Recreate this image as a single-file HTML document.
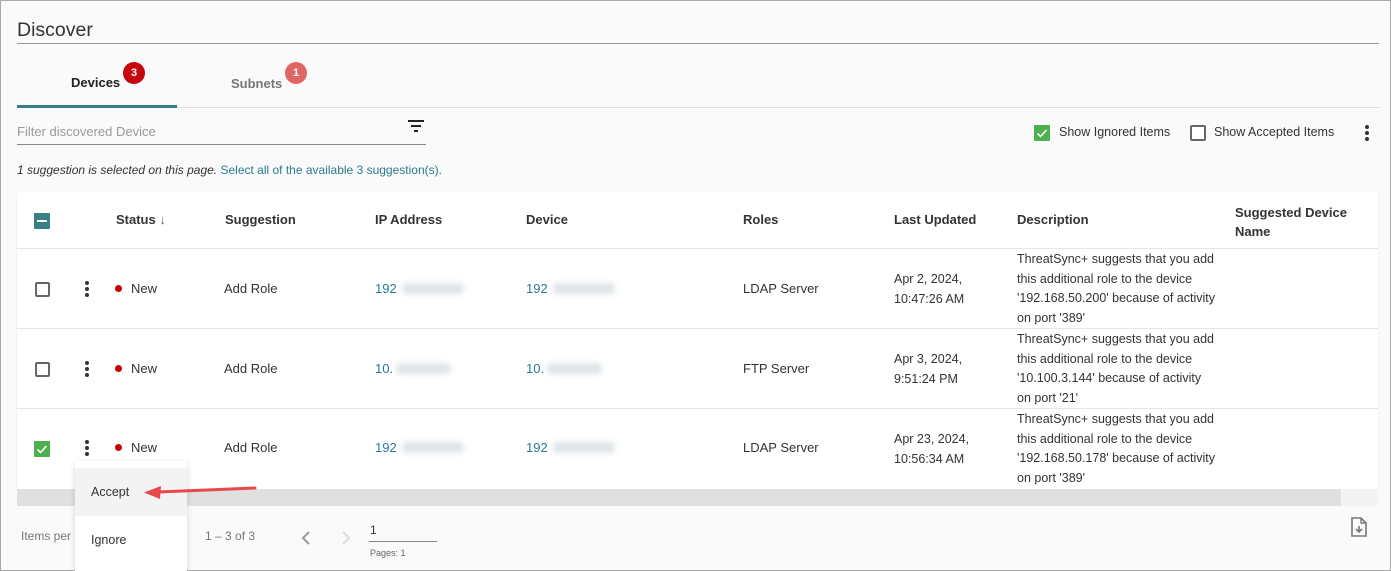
<!DOCTYPE html>
<html><head><style>
*{box-sizing:border-box;margin:0;padding:0}
body{width:1391px;height:571px;overflow:hidden;background:#fafafa;font-family:"Liberation Sans",Arial,sans-serif;color:#333;position:relative}
.frame{position:absolute;left:0;top:0;width:1391px;height:571px;border:1px solid #a8a8a8}
.a{position:absolute;white-space:nowrap}
.th{font-weight:bold;font-size:13px;color:#333}
.td{font-size:13px;color:#333}
.link{color:#2b7a8c}
.blur{position:absolute;height:11px;background:#dde4e7;filter:blur(3px);border-radius:5px}
.cb{position:absolute;width:15px;height:15px;border:2px solid #666;border-radius:2px;background:#fff}
.dots{position:absolute;width:4px}
.dots i{display:block;width:4px;height:4px;border-radius:50%;background:#333;margin-bottom:2px}
.dot{position:absolute;width:7px;height:7px;border-radius:50%;background:#c00}
.hl{position:absolute;left:17px;width:1361px;height:1px;background:#e6e6e6}
</style></head><body>
<div class="frame"></div>
<div class="a" style="left:17px;top:19px;font-size:19.5px;color:#333">Discover</div>
<div class="a" style="left:17px;top:43px;width:1362px;height:1px;background:#999"></div>
<div class="a" style="left:71px;top:75px;font-size:13px;font-weight:bold;color:#222">Devices</div>
<div class="a" style="left:123px;top:62px;width:22px;height:22px;border-radius:50%;background:#c8050c;color:#fff;font-size:11px;font-weight:bold;text-align:center;line-height:22px">3</div>
<div class="a" style="left:231px;top:76px;font-size:13px;font-weight:bold;color:#777">Subnets</div>
<div class="a" style="left:285px;top:62px;width:22px;height:22px;border-radius:50%;background:#e06666;color:#fff;font-size:11px;font-weight:bold;text-align:center;line-height:22px">1</div>
<div class="a" style="left:17px;top:107px;width:1362px;height:1px;background:#ddd"></div>
<div class="a" style="left:17px;top:105px;width:160px;height:3px;background:#3a7f86"></div>
<div class="a" style="left:17px;top:124px;font-size:13px;color:#999">Filter discovered Device</div>
<div class="a" style="left:17px;top:144px;width:409px;height:1px;background:#888"></div>
<svg class="a" style="left:407px;top:119px" width="18" height="14"><rect x="1" y="1" width="16" height="2" fill="#222"/><rect x="4" y="6" width="10" height="2" fill="#222"/><rect x="7" y="11" width="4" height="2" fill="#222"/></svg>
<div class="a" style="left:1034px;top:125px;width:16px;height:16px;background:#4caf50;border-radius:1px"><svg width="16" height="16"><path d="M3.5 8.5l3 3 6-6.5" stroke="#fff" stroke-width="1.6" fill="none"/></svg></div>
<div class="a td" style="left:1059px;top:125px;font-size:12.5px">Show Ignored Items</div>
<div class="cb" style="left:1190px;top:125px;width:16px;height:16px"></div>
<div class="a td" style="left:1214px;top:125px;font-size:12.5px">Show Accepted Items</div>
<div class="dots" style="left:1365px;top:125px"><i></i><i></i><i></i></div>
<div class="a" style="left:17px;top:163px;font-size:12px;color:#333"><i>1 suggestion is selected on this page.</i> <span class="link">Select all of the available 3 suggestion(s).</span></div>
<div class="a" style="left:17px;top:192px;width:1361px;height:297px;background:#fff;box-shadow:0 1px 3px rgba(0,0,0,.08)"></div>
<div class="a" style="left:34px;top:213px;width:16px;height:16px;background:#3a7f86;border-radius:1px"><div style="position:absolute;left:3px;top:7px;width:10px;height:2px;background:#fff"></div></div>
<div class="a th" style="left:116px;top:212px">Status <span style="color:#666">&#8595;</span></div>
<div class="a th" style="left:225px;top:212px">Suggestion</div>
<div class="a th" style="left:375px;top:212px">IP Address</div>
<div class="a th" style="left:526px;top:212px">Device</div>
<div class="a th" style="left:743px;top:212px">Roles</div>
<div class="a th" style="left:894px;top:212px">Last Updated</div>
<div class="a th" style="left:1017px;top:212px">Description</div>
<div class="a th" style="left:1235px;top:203px;line-height:19px">Suggested Device<br>Name</div>
<div class="hl" style="top:248px"></div>
<div class="hl" style="top:328px"></div>
<div class="hl" style="top:408px"></div>

<div class="cb" style="left:35px;top:282px"></div>
<div class="dots" style="left:85px;top:281px"><i></i><i></i><i></i></div>
<div class="dot" style="left:115px;top:285px"></div>
<div class="a td" style="left:131px;top:281px">New</div>
<div class="a td" style="left:224px;top:281px">Add Role</div>
<div class="a td link" style="left:375px;top:281px">192</div><div class="blur" style="left:402px;top:283px;width:62px"></div>
<div class="a td link" style="left:526px;top:281px">192</div><div class="blur" style="left:553px;top:283px;width:62px"></div>
<div class="a td" style="left:743px;top:281px">LDAP Server</div>
<div class="a td" style="left:894px;top:270px;line-height:19.5px;font-size:12.5px">Apr 2, 2024,<br>10:47:26 AM</div>
<div class="a td" style="left:1017px;top:250px;line-height:19.5px;font-size:12.5px">ThreatSync+ suggests that you add<br>this additional role to the device<br>'192.168.50.200' because of activity<br>on port '389'</div>

<div class="cb" style="left:35px;top:362px"></div>
<div class="dots" style="left:85px;top:361px"><i></i><i></i><i></i></div>
<div class="dot" style="left:115px;top:365px"></div>
<div class="a td" style="left:131px;top:361px">New</div>
<div class="a td" style="left:224px;top:361px">Add Role</div>
<div class="a td link" style="left:375px;top:361px">10.</div><div class="blur" style="left:396px;top:363px;width:55px"></div>
<div class="a td link" style="left:526px;top:361px">10.</div><div class="blur" style="left:547px;top:363px;width:55px"></div>
<div class="a td" style="left:743px;top:361px">FTP Server</div>
<div class="a td" style="left:894px;top:350px;line-height:19.5px;font-size:12.5px">Apr 3, 2024,<br>9:51:24 PM</div>
<div class="a td" style="left:1017px;top:330px;line-height:19.5px;font-size:12.5px">ThreatSync+ suggests that you add<br>this additional role to the device<br>'10.100.3.144' because of activity<br>on port '21'</div>

<div class="a" style="left:34px;top:441px;width:16px;height:16px;background:#4caf50;border-radius:1px"><svg width="16" height="16"><path d="M3.5 8.5l3 3 6-6.5" stroke="#fff" stroke-width="1.6" fill="none"/></svg></div>
<div class="dots" style="left:85px;top:440px"><i></i><i></i><i></i></div>
<div class="dot" style="left:115px;top:444px"></div>
<div class="a td" style="left:131px;top:440px">New</div>
<div class="a td" style="left:224px;top:440px">Add Role</div>
<div class="a td link" style="left:375px;top:440px">192</div><div class="blur" style="left:402px;top:442px;width:62px"></div>
<div class="a td link" style="left:526px;top:440px">192</div><div class="blur" style="left:553px;top:442px;width:62px"></div>
<div class="a td" style="left:743px;top:440px">LDAP Server</div>
<div class="a td" style="left:894px;top:430px;line-height:19.5px;font-size:12.5px">Apr 23, 2024,<br>10:56:34 AM</div>
<div class="a td" style="left:1017px;top:410px;line-height:19.5px;font-size:12.5px">ThreatSync+ suggests that you add<br>this additional role to the device<br>'192.168.50.178' because of activity<br>on port '389'</div>

<div class="a" style="left:17px;top:489px;width:1324px;height:17px;background:#e0e0e0"></div>
<div class="a" style="left:1341px;top:489px;width:37px;height:17px;background:#f3f3f3"></div>

<div class="a" style="left:21px;top:529px;font-size:12px;color:#777">Items per</div>
<div class="a" style="left:205px;top:529px;font-size:12px;color:#777">1 – 3 of 3</div>
<svg class="a" style="left:300px;top:530px" width="12" height="16"><path d="M9 2L3 8l6 6" stroke="#999" stroke-width="2" fill="none"/></svg>
<svg class="a" style="left:340px;top:530px" width="12" height="16"><path d="M3 2l6 6-6 6" stroke="#ddd" stroke-width="2" fill="none"/></svg>
<div class="a" style="left:370px;top:523px;font-size:12px;color:#333">1</div>
<div class="a" style="left:369px;top:541px;width:68px;height:1px;background:#888"></div>
<div class="a" style="left:370px;top:548px;font-size:9px;color:#666">Pages: 1</div>
<svg class="a" style="left:1350px;top:517px" width="18" height="20"><path d="M2 1h9l5 5v13H2z" stroke="#777" stroke-width="1.6" fill="none"/><path d="M11 1v5h5" stroke="#777" stroke-width="1.4" fill="none"/><path d="M9 9v6M6 12l3 3 3-3" stroke="#777" stroke-width="1.6" fill="none"/></svg>

<div class="a" style="left:75px;top:461px;width:112px;height:110px;background:#fff;box-shadow:0 2px 6px rgba(0,0,0,.15)"></div>
<div class="a" style="left:75px;top:468px;width:112px;height:48px;background:#f3f3f3"></div>
<div class="a" style="left:91px;top:485px;font-size:12.5px;color:#333">Accept</div>
<div class="a" style="left:91px;top:533px;font-size:12.5px;color:#333">Ignore</div>
<svg class="a" style="left:140px;top:480px" width="120" height="20"><path d="M115 8L18 12" stroke="#e8474c" stroke-width="3" stroke-linecap="round"/><path d="M4 12.5L21 6l-1 13z" fill="#e8474c"/></svg>
</body></html>
